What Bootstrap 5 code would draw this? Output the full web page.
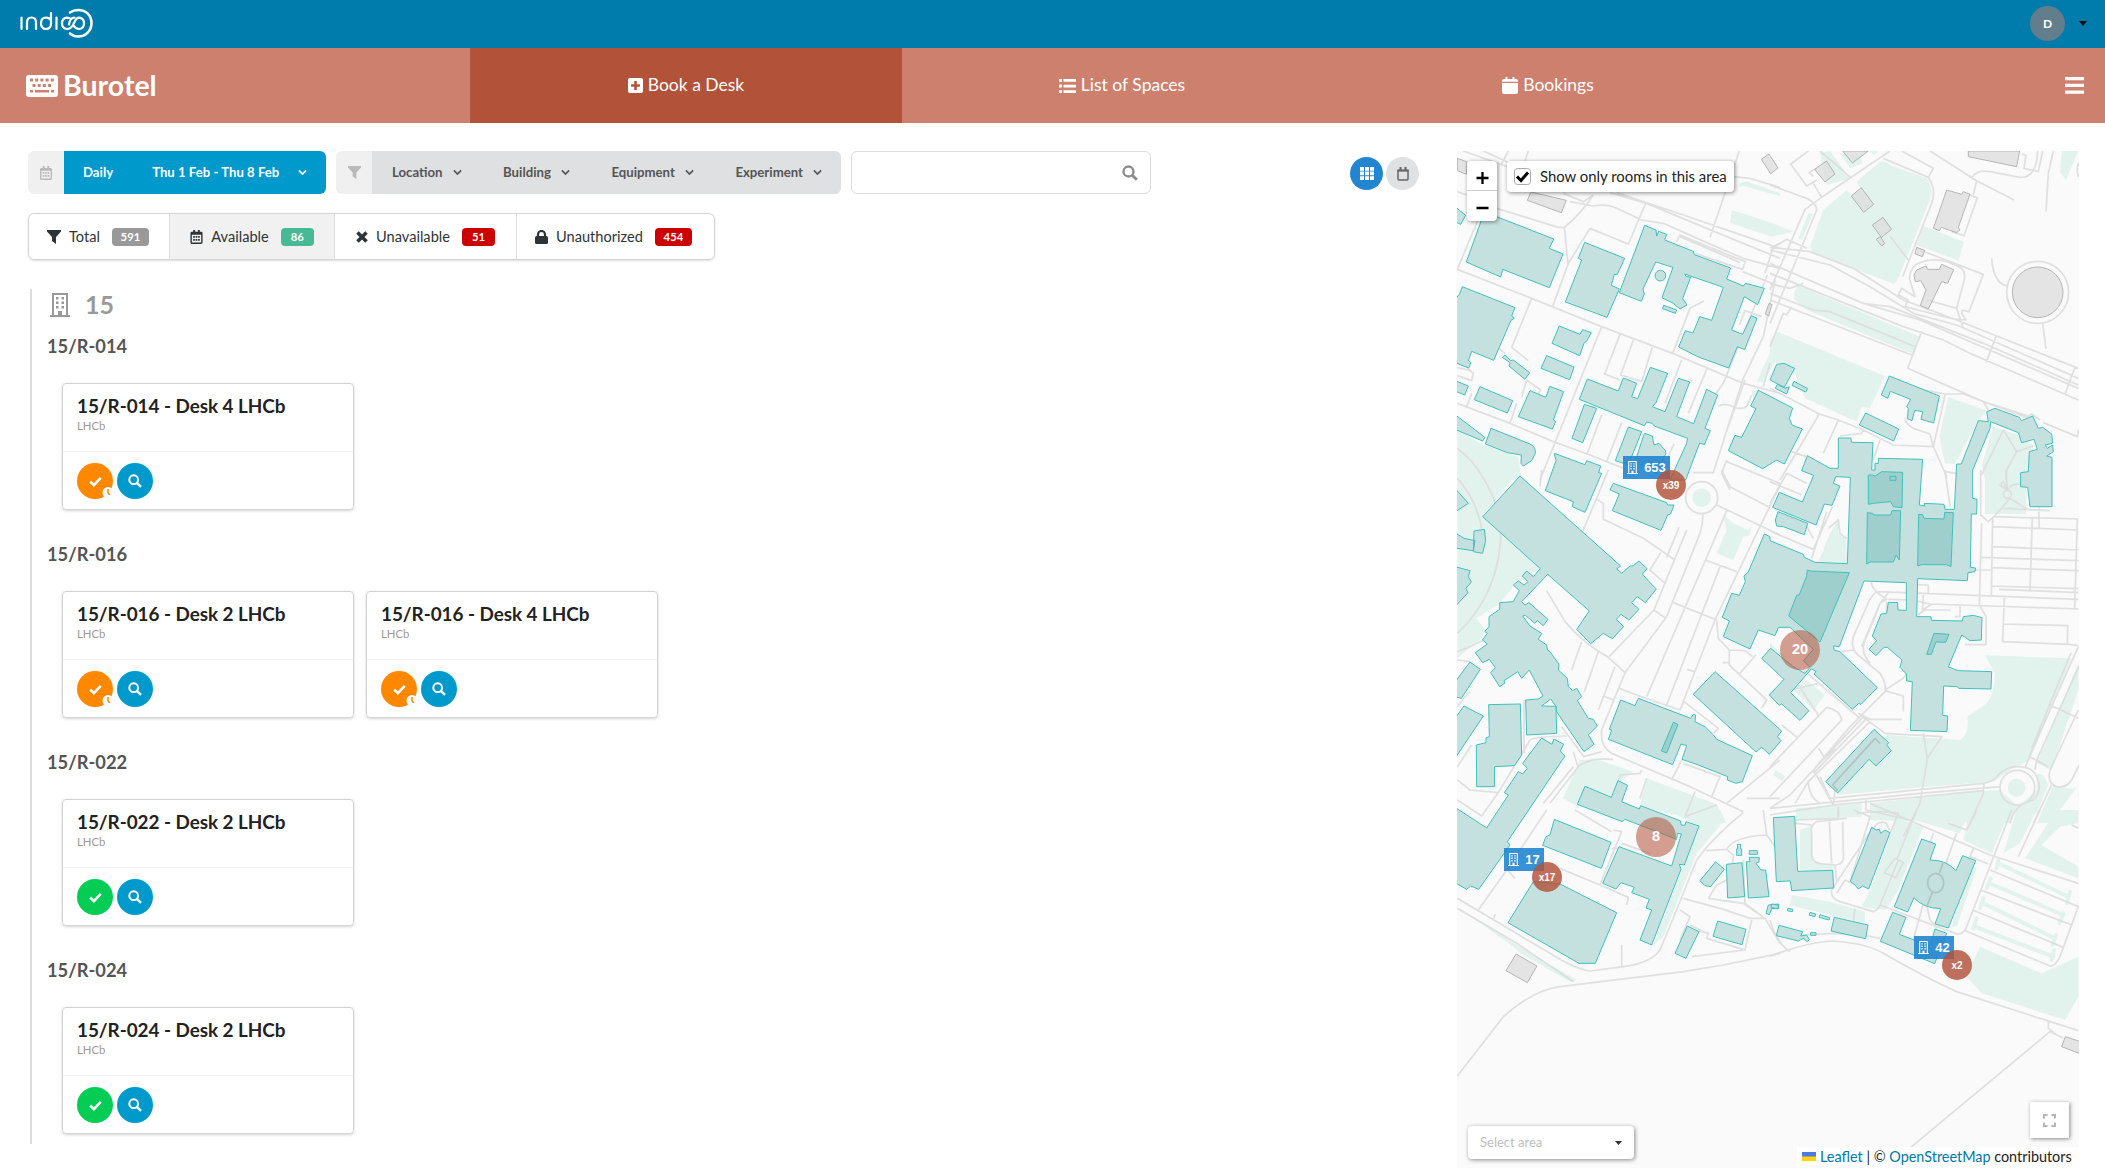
<!DOCTYPE html>
<html lang="en">
<head>
<meta charset="utf-8">
<title>Burotel</title>
<meta name="viewport" content="width=device-width, initial-scale=1">
<link href="https://cdn.jsdelivr.net/npm/bootstrap@5.3.0/dist/css/bootstrap.min.css" rel="stylesheet">
<style>
body{font-family:Lato,"Open Sans",sans-serif;font-size:14px;color:#222;height:1173px;overflow:hidden;background:#fff}
svg{display:block;flex:none}
.top-bar{height:48px;background:#007cac;padding:0 18px 1px 19px}
.avatar{width:35px;height:35px;background:#627d8b;font-size:12px}
.module-bar{height:75px;background:#ce806e;color:#fff}
.brand{width:470px;padding-left:26px;font-size:28.5px;gap:5px}
.module-tab{width:432px;font-size:17.5px;gap:5px;color:#fff!important;text-decoration:none!important}
.module-tab.active{background:#b25239}
.workspace{padding:28px 26px 0 28px}
.results-col{width:1429px}
.filter-cap{width:36px;height:43px;background:#f0f0f0;color:#b9b9b9}
.filter-group{height:43px;font-weight:700;font-size:13.2px}
.filter-blue{background:#09c;color:#fff}
.filter-grey{background:#dfe0e2;color:#555}
.search-box{width:300px;height:43px;border:1px solid #dcdddf;padding-right:12px}
.view-btn{width:33px;height:33px}
.status-bar{margin-top:19px;height:47px;width:687px;border:1px solid #d4d4d5;box-shadow:0 1px 2px rgba(34,36,38,.15);font-size:14.6px;color:#2e3436}
.status-bar>div{border-right:1px solid #dededf;gap:8px}
.status-bar>div:last-child{border-right:0}
.count{min-width:32px;height:18px;padding:0 8px;border-radius:4px;color:#fff;font-weight:700;font-size:11.3px;line-height:17px;text-align:center;margin-left:4px}
.building-group{margin:29px 0 0 2px;border-left:2px solid #ddd;height:855px;padding-left:15px}
.building-title{height:32px;font-size:25px;color:#999;gap:15px;padding-left:3px}
.room-title{height:22px;font-size:18.3px;line-height:22px;color:#555;margin-bottom:26px}
.room-group{height:208px;padding-top:14px}
.desk-card{width:292px;height:127px;border:1px solid #d4d4d5;border-radius:4px;box-shadow:0 1px 3px #d4d4d5}
.desk-info{height:68px;padding:12px 14px;border-bottom:1px solid #efefef}
.desk-name{font-size:18.9px;line-height:20px;letter-spacing:-.05px;color:#222}
.desk-sub{font-size:11.3px;line-height:14px;color:#999;margin-top:3px}
.desk-actions{padding:11px 14px;gap:4px}
.act{width:36px;height:36px}
.bg-ask{background:#ff8800}.bg-ok{background:#05cc55}.bg-look{background:#09c}
.map-pane{width:622px;height:1017px;background:#fafafa;overflow:hidden}
.map-pane .over{position:absolute;background:#fff;box-shadow:1px 1px 4px rgba(0,0,0,.45)}
.lawn{fill:#e2f3ed}.lawn-strip{fill:none;stroke:#e2f3ed;stroke-width:12;stroke-linecap:round}
.road{fill:none;stroke:#ddd;stroke-opacity:.9;stroke-width:5.2;stroke-linejoin:round}
.plain{fill:#dcdcdc;fill-opacity:.75;stroke:#aaa;stroke-width:2.5}
.block{fill:#c5e1df;stroke:#3fc1ba;stroke-width:3}
.court{fill:#9fcfcd;stroke:#3fc1ba;stroke-width:3}
.pin{position:absolute;height:23px;background:rgba(33,133,208,.9);color:#fff;font:700 13px/23px "Liberation Sans",sans-serif;gap:6px}
.bubble{position:absolute;border-radius:50%;color:#fff;font-family:"Liberation Sans",sans-serif;font-weight:700}
.bubble-s{width:30px;height:30px;background:rgba(178,82,57,.82);font-size:10px}
.bubble-l{width:40px;height:40px;background:rgba(178,82,57,.55);font-size:14.5px}
.credit a{color:#0078a8!important;text-decoration:none!important}
</style>
<script src="https://cdn.jsdelivr.net/npm/bootstrap@5.3.0/dist/js/bootstrap.bundle.min.js"></script>
</head>
<body>
<svg width="0" height="0" class="position-absolute">
<defs>
<symbol id="i-building" viewBox="0 0 20 24"><path fill="currentColor" fill-rule="evenodd" d="M2 0h16v22h2v2H0v-2h2zM4 2v20h4v-4h4v4h4V2z"/><path fill="currentColor" d="M6 4h2.500v2.500H6zM11.500 4H14v2.500h-2.500zM6 8.500h2.500V11H6zM11.500 8.500H14V11h-2.500zM6 13h2.500v2.500H6zM11.500 13H14v2.500h-2.500z"/></symbol>
<symbol id="i-search" viewBox="0 0 16 16"><circle cx="6.500" cy="6.500" r="5" fill="none" stroke="currentColor" stroke-width="2.300"/><path d="M10.300 10.300L14.800 14.800" stroke="currentColor" stroke-width="2.800"/></symbol>
<symbol id="i-check" viewBox="0 0 16 13"><path d="M1.500 6.500L6 11L14.500 2" fill="none" stroke="currentColor" stroke-width="3.200"/></symbol>
<symbol id="i-caret" viewBox="0 0 10 7"><path d="M1 1.200L5 5.200L9 1.200" fill="none" stroke="currentColor" stroke-width="1.900"/></symbol>
<symbol id="i-funnel" viewBox="0 0 14 14"><path d="M0 0h14v1.500L9 7v7l-4-3V7L0 1.500z" fill="currentColor"/></symbol>
<symbol id="i-cal" viewBox="0 0 13 15"><path fill="currentColor" fill-rule="evenodd" d="M3 0h2v2h3V0h2v2h1.500Q13 2 13 3.500v10Q13 15 11.500 15h-10Q0 15 0 13.500v-10Q0 2 1.500 2H3zM1.500 5v8.500h10V5z"/><path fill="currentColor" d="M3 6.500h1.800v1.800H3zM5.600 6.500h1.800v1.800H5.600zM8.200 6.500H10v1.800H8.200zM3 9.700h1.800v1.800H3zM5.600 9.700h1.800v1.800H5.600zM8.200 9.700H10v1.800H8.200z"/></symbol>
</defs>
</svg>

<header class="top-bar d-flex align-items-center justify-content-between">
<svg width="76" height="34" viewBox="0 0 76 34" fill="none" stroke="#fff" stroke-width="2.200" stroke-linecap="round" aria-label="indico"><path d="M2.500 10.500V22M8 22V15.500Q8 10.500 12.500 10.500T17 15.500V22M32 6V16.500Q32 22 27 22T22 16.300T27 10.600Q30.500 10.600 32 13.500M37.500 10.500V22"/><path d="M52 12Q50.500 10.600 48 10.600Q43 11 43 16.300T48 22Q51.500 22 54 18L55.500 15Q57.500 10.600 60 10.600Q65 11 65 16.300T60 22Q56.500 22 54.500 18.500M50 17.500Q51 10.600 55.500 10.600"/><path stroke-width="2.600" d="M51 5.500Q54.500 3 59 3C67 3 72.500 8.500 72.500 16S67 29.500 59 29.500Q54.500 29.500 51 26.500"/></svg>
<div class="d-flex align-items-center"><div class="avatar rounded-circle text-white fw-bold d-flex align-items-center justify-content-center" style="margin-right:14px">D</div><svg width="8" height="6" viewBox="0 0 8 6"><path d="M0 0h8L4 5z" fill="#111"/></svg></div>
</header>

<nav class="module-bar d-flex">
<div class="brand d-flex align-items-center fw-bold"><svg width="32" height="22" viewBox="0 0 32 22"><path fill="#fff" fill-rule="evenodd" d="M3 0h26q3 0 3 3v16q0 3-3 3H3q-3 0-3-3V3q0-3 3-3zM4 3.500v3h3v-3zm5.200 0v3h3v-3zm5.200 0v3h3v-3zm5.200 0v3h3v-3zm5.200 0v3h3v-3zM6.500 9v3h3V9zm5.200 0v3h3V9zm5.200 0v3h3V9zm5.200 0v3h3V9zM4 15v2.500h3V15zm5 0v2.500h14V15zm16 0v2.500h3V15z"/></svg><span>Burotel</span></div>
<a href="#" class="module-tab active d-flex align-items-center justify-content-center"><svg width="15" height="15" viewBox="0 0 17 17"><path fill="#fff" fill-rule="evenodd" d="M2 0h13q2 0 2 2v13q0 2-2 2H2q-2 0-2-2V2q0-2 2-2zm5 3.500V7H3.500v3H7v3.500h3V10h3.500V7H10V3.500z"/></svg>Book a Desk</a>
<a href="#" class="module-tab d-flex align-items-center justify-content-center ps-2"><svg width="17" height="14" viewBox="0 0 17 14"><path fill="#fff" d="M0 0h3v3H0zM4.500 0H17v2.700H4.500zM0 5.500h3v3H0zM4.500 5.700H17v2.700H4.500zM0 11h3v3H0zM4.500 11.200H17v2.700H4.500z"/></svg>List of Spaces</a>
<a href="#" class="module-tab d-flex align-items-center justify-content-center pe-1"><svg width="16" height="17" viewBox="0 0 16 17"><path fill="#fff" d="M3.500 0h2v2h5V0h2v2H14q2 0 2 2v.800H0V4q0-2 2-2h1.500zM0 6h16v9q0 2-2 2H2q-2 0-2-2z"/></svg>Bookings</a>
<div class="ms-auto d-flex align-items-center pe-3"><svg class="me-1" width="20" height="17" viewBox="0 0 20 17"><path fill="#fff" d="M0 0h19v3.200H0zM0 6.800h19V10H0zM0 13.600h19v3.200H0z"/></svg></div>
</nav>

<main class="workspace d-flex">
<section class="results-col">
<div class="d-flex align-items-center">
<div class="filter-group d-flex rounded overflow-hidden">
<div class="filter-cap d-flex align-items-center justify-content-center"><svg width="12" height="14"><use href="#i-cal"/></svg></div>
<div class="filter-blue d-flex align-items-center" style="width:262px"><span style="margin:0 39px 0 19px">Daily</span><span class="me-2">Thu 1 Feb - Thu 8 Feb</span><svg class="ms-auto" style="margin-right:19px" width="9" height="7"><use href="#i-caret"/></svg></div>
</div>
<div class="filter-group d-flex rounded overflow-hidden" style="margin:0 10px">
<div class="filter-cap d-flex align-items-center justify-content-center"><svg width="13" height="13"><use href="#i-funnel"/></svg></div>
<div class="filter-grey d-flex align-items-center justify-content-between" style="width:469px;padding:0 19px 0 20px">
<span class="d-flex align-items-center">Location<svg style="margin-left:10px" width="9" height="7"><use href="#i-caret"/></svg></span>
<span class="d-flex align-items-center">Building<svg style="margin-left:10px" width="9" height="7"><use href="#i-caret"/></svg></span>
<span class="d-flex align-items-center">Equipment<svg style="margin-left:10px" width="9" height="7"><use href="#i-caret"/></svg></span>
<span class="d-flex align-items-center">Experiment<svg style="margin-left:10px" width="9" height="7"><use href="#i-caret"/></svg></span>
</div></div>
<div class="search-box rounded d-flex align-items-center justify-content-end" style="color:#8b8b8b"><svg width="16" height="16"><use href="#i-search"/></svg></div>
<div class="d-flex" style="margin-left:199px;gap:3px;padding-top:2px">
<div class="view-btn rounded-circle d-flex align-items-center justify-content-center" style="background:#2185d0"><svg width="14" height="13" viewBox="0 0 14 13"><path fill="#fff" d="M0 0h4v3.700H0zM5 0h4v3.700H5zM10 0h4v3.700h-4zM0 4.600h4v3.700H0zM5 4.600h4v3.700H5zM10 4.600h4v3.700h-4zM0 9.200h4V13H0zM5 9.200h4V13H5zM10 9.200h4V13h-4z"/></svg></div>
<div class="view-btn rounded-circle d-flex align-items-center justify-content-center" style="background:#e0e1e2"><svg width="12" height="14" viewBox="0 0 12 14"><path d="M1 3.500h10V12q0 1-1 1H2q-1 0-1-1z" fill="none" stroke="#666" stroke-width="1.500"/><path d="M.500 2.500h11v2H.500zM2.500 0h2v3h-2zM7.500 0h2v3h-2z" fill="#666"/></svg></div>
</div>
</div>

<div class="status-bar rounded d-flex">
<div class="d-flex align-items-center justify-content-center" style="width:141px;padding-right:2px"><svg width="14" height="14"><use href="#i-funnel"/></svg>Total<span class="count" style="background:#999;width:37px">591</span></div>
<div class="d-flex align-items-center justify-content-center" style="width:165px;background:#f1f1f1"><svg width="13" height="14"><use href="#i-cal"/></svg>Available<span class="count" style="background:#45ba94;width:33px">86</span></div>
<div class="d-flex align-items-center justify-content-center" style="width:182px"><svg width="12" height="12" viewBox="0 0 12 12"><path d="M1.500 1.500l9 9M10.500 1.500l-9 9" stroke="#2e3436" stroke-width="3.600"/></svg>Unavailable<span class="count" style="background:#c00;width:33px">51</span></div>
<div class="d-flex align-items-center justify-content-center flex-fill pe-1"><svg width="13" height="14" viewBox="0 0 13 14"><path d="M3 7V4.500a3.500 3.500 0 0 1 7 0V7" fill="none" stroke="#2e3436" stroke-width="2.200"/><rect y="6" width="13" height="8" rx="1.500" fill="#2e3436"/></svg>Unauthorized<span class="count" style="background:#c00;width:37px">454</span></div>
</div>

<div class="building-group">
<div class="building-title d-flex align-items-center fw-bold"><svg width="20" height="24"><use href="#i-building"/></svg>15</div>
<div class="room-group"><div class="room-title fw-bold">15/R-014</div>
<div class="d-flex" style="margin-left:15px;gap:12px">
<div class="desk-card"><div class="desk-info"><div class="desk-name fw-bold">15/R-014 - Desk 4 LHCb</div><div class="desk-sub">LHCb</div></div><div class="desk-actions d-flex text-white"><span class="act bg-ask rounded-circle d-flex align-items-center justify-content-center position-relative"><svg width="13" height="11"><use href="#i-check"/></svg><svg class="position-absolute bottom-0 end-0" width="11" height="12" viewBox="0 0 11 12"><circle cx="6" cy="5.500" r="5.500" fill="#fff"/><path d="M6 2v4l2 2" stroke="#f80" stroke-width="1.500" fill="none"/></svg></span><span class="act bg-look rounded-circle d-flex align-items-center justify-content-center"><svg width="14" height="14"><use href="#i-search"/></svg></span></div></div>
</div></div>
<div class="room-group"><div class="room-title fw-bold">15/R-016</div>
<div class="d-flex" style="margin-left:15px;gap:12px">
<div class="desk-card"><div class="desk-info"><div class="desk-name fw-bold">15/R-016 - Desk 2 LHCb</div><div class="desk-sub">LHCb</div></div><div class="desk-actions d-flex text-white"><span class="act bg-ask rounded-circle d-flex align-items-center justify-content-center position-relative"><svg width="13" height="11"><use href="#i-check"/></svg><svg class="position-absolute bottom-0 end-0" width="11" height="12" viewBox="0 0 11 12"><circle cx="6" cy="5.500" r="5.500" fill="#fff"/><path d="M6 2v4l2 2" stroke="#f80" stroke-width="1.500" fill="none"/></svg></span><span class="act bg-look rounded-circle d-flex align-items-center justify-content-center"><svg width="14" height="14"><use href="#i-search"/></svg></span></div></div>
<div class="desk-card"><div class="desk-info"><div class="desk-name fw-bold">15/R-016 - Desk 4 LHCb</div><div class="desk-sub">LHCb</div></div><div class="desk-actions d-flex text-white"><span class="act bg-ask rounded-circle d-flex align-items-center justify-content-center position-relative"><svg width="13" height="11"><use href="#i-check"/></svg><svg class="position-absolute bottom-0 end-0" width="11" height="12" viewBox="0 0 11 12"><circle cx="6" cy="5.500" r="5.500" fill="#fff"/><path d="M6 2v4l2 2" stroke="#f80" stroke-width="1.500" fill="none"/></svg></span><span class="act bg-look rounded-circle d-flex align-items-center justify-content-center"><svg width="14" height="14"><use href="#i-search"/></svg></span></div></div>
</div></div>
<div class="room-group"><div class="room-title fw-bold">15/R-022</div>
<div class="d-flex" style="margin-left:15px;gap:12px">
<div class="desk-card"><div class="desk-info"><div class="desk-name fw-bold">15/R-022 - Desk 2 LHCb</div><div class="desk-sub">LHCb</div></div><div class="desk-actions d-flex text-white"><span class="act bg-ok rounded-circle d-flex align-items-center justify-content-center"><svg width="13" height="11"><use href="#i-check"/></svg></span><span class="act bg-look rounded-circle d-flex align-items-center justify-content-center"><svg width="14" height="14"><use href="#i-search"/></svg></span></div></div>
</div></div>
<div class="room-group"><div class="room-title fw-bold">15/R-024</div>
<div class="d-flex" style="margin-left:15px;gap:12px">
<div class="desk-card"><div class="desk-info"><div class="desk-name fw-bold">15/R-024 - Desk 2 LHCb</div><div class="desk-sub">LHCb</div></div><div class="desk-actions d-flex text-white"><span class="act bg-ok rounded-circle d-flex align-items-center justify-content-center"><svg width="13" height="11"><use href="#i-check"/></svg></span><span class="act bg-look rounded-circle d-flex align-items-center justify-content-center"><svg width="14" height="14"><use href="#i-search"/></svg></span></div></div>
</div></div>
</div>
</section>

<section class="map-pane position-relative">
<svg width="622" height="1017" viewBox="1457 151 622 1017">
<!-- lawns -->
<g class="lawn">
<path transform="translate(1450 140) scale(.33333)" d="M868 130L890 124L990 160V168L880 138L868 142ZM846 210L968 250L1030 275L965 290L840 248ZM990 575L920 725H940L990 640ZM22 870L100 915L205 950L215 1020H22ZM905 750L925 752L910 785Z"/>
<path transform="translate(1770 140) scale(.33333)" d="M330 65Q350 62 360 75L470 115Q490 140 480 180L385 415L372 432L130 340L120 320L160 210L230 150L245 165L272 145L260 125ZM460 258L582 305L566 362L440 315ZM85 437L450 590L430 643L110 510L75 480Q65 460 85 437ZM22 575L345 708L300 805L275 800L260 845L105 775L70 690L0 660V600ZM535 770L650 812L620 850L555 972L525 970L508 890ZM670 860L700 870L745 885L790 915L775 1020H645L635 975ZM875 33H925L888 120L870 95ZM150 40L180 33L240 115L170 135ZM210 40L240 85L280 70L270 50ZM300 33H325L310 45ZM115 220L128 222L95 300L85 295Z"/>
<path transform="translate(1450 470) scale(.33333)" d="M22 0H210L100 135L270 295L190 350L150 400L80 445L105 480L95 505L22 565ZM390 870L440 868L550 905L500 945L480 985L400 960L385 1010L338 985ZM590 925L800 1003L830 1060L650 1030L570 1005ZM727 83a28 28 0 1 0 56 0a28 28 0 1 0 -56 0ZM820 135L850 160L895 180L905 165L900 195L880 200L850 270L800 250L830 180Z"/>
<path transform="translate(1770 470) scale(.33333)" d="M205 150L180 190L145 275L232 280L228 205L205 190ZM110 630L165 675L130 720L70 660ZM645 556L905 565L780 870L720 900L670 935L470 950L200 975L350 795L570 810Q600 790 592 740L650 700Q675 670 675 610ZM925 580V660L845 900L800 880ZM645 0H770L768 132H645ZM800 910L820 915L835 945L800 1030L760 1040L735 1020L720 1060L300 1050V1000L600 965L690 960L745 1010L800 960ZM713 953a27 27 0 1 0 54 0a27 27 0 1 0 -54 0ZM850 945L890 955L918 955L840 1060H800ZM78 1015L275 1000V1040L78 1050ZM15 900L45 918L38 934L10 915ZM0 520L60 570L0 540Z"/>
<path transform="translate(1450 810) scale(.33333)" d="M22 290L210 410L380 510L360 515L210 430L190 410ZM650 0H810L825 30L740 130L640 380L610 405L695 180L747 48Z"/>
<path transform="translate(1770 810) scale(.33333)" d="M380 25L460 50L380 250L345 300L275 290L300 240ZM65 255L180 275L285 305V340L200 320L60 285ZM90 60L125 45L130 155L190 165V180H90ZM400 0H600L570 70L400 20ZM600 0H720L665 130L580 90ZM740 0H800L750 100L700 130ZM860 0H925V40L870 50L815 105L925 170V205L765 145ZM630 410L815 490L925 440V560L885 630L635 550L590 500ZM600 165L620 175L560 350L545 350Z"/>
<path class="lawn-strip" transform="translate(1770 810) scale(.33333)" d="M685 160L895 260M660 220L880 315M640 280L855 385M615 350L850 440M685 150L680 175M662 205L650 235M640 265L630 295M620 325L610 355M900 245L890 280M880 310L868 340M858 375L848 405M852 420L845 450"/>
</g>
<!-- roads and footpaths -->
<g class="road">
<path transform="translate(1450 140) scale(.33333)" d="M40 33L172 80M100 33L172 66M235 33L225 62M175 33L155 72M868 33L780 292M22 155L50 165M140 205L325 262L343 262Q390 225 430 165M343 262L354 372L420 265L535 312L587 190M354 372L308 500M82 245L22 388L245 475L455 560L668 640L880 730L990 760M245 475L185 622L235 662M668 640L720 505L762 483M455 560L270 1020M510 583L464 702L510 720M550 600L512 705L575 725L607 622M695 660L645 790M770 688L715 820M22 790L180 850L310 905L420 945L560 1000M180 850L200 790M50 800L65 760M215 770L230 720L272 750L262 765M455 825L410 945M515 848L470 965M672 912L640 980M340 160L400 185L430 165M360 185L430 198Q470 190 500 205L575 240L640 250L770 308L880 355L990 385M480 158L590 190L830 290L990 355M500 158L700 225L860 280L990 325M680 305L690 285L860 355L886 365L878 388L735 340M690 290L830 350L870 368M850 110L900 115L990 142M878 395L990 440M952 405L820 730L770 800M975 420L940 590L880 715L790 998H730M868 555L885 512L935 530M990 310L970 320L945 400M805 797Q830 790 850 800T890 800L905 765M885 720L820 900M830 960L815 1000L840 1050M830 965L990 1030M22 925Q70 960 100 1015M22 683L55 690L70 700L65 722L22 707M65 695L50 680L55 650M140 620L165 640M960 670L940 740"/>
<path transform="translate(1770 140) scale(.33333)" d="M0 135L110 175Q140 190 140 210L85 345L0 550M155 172L105 208L0 450M155 172L360 33M150 33L242 112M155 172L130 130M140 120L110 138L62 72L115 33M130 110L118 97L140 85M340 55L475 112L490 85L395 33M475 112Q500 150 485 190L398 410M480 33L620 122L732 180M606 112Q620 88 660 95L750 112Q800 115 803 33M620 122L610 165M598 165L622 173L582 287L545 275M755 42L768 45L762 85L805 95L818 33M850 33L835 100L828 215M925 70Q918 90 925 110M0 322L120 335L250 385L400 480L560 540L680 588L925 685M0 330L180 375L300 440L430 520L560 555L925 715M0 370L280 490L450 540L925 745M0 400L400 560L520 600L600 640L925 780M0 432L60 445L100 430M0 460L130 510L180 515L435 620M0 480L425 645M5 325L50 298L110 325M275 490L360 500L640 610L925 735M455 575L413 685L640 785L780 830M820 848L922 890L925 870M678 590L648 668M915 682L885 762M360 288L415 360M665 355Q670 430 712 438M818 550L828 627M450 330L640 403L597 515L577 510L575 520L588 540L550 537L405 500L415 480L385 465L395 445L435 470L420 420Q415 400 435 375Q500 340 575 385Q590 400 580 430L560 505L580 565M470 480L560 505M0 745L148 822L205 840L280 870L370 915L490 920L480 882L430 865Q410 855 405 835M148 822L30 1020M205 840L160 940M280 870L275 880L210 888M525 765L490 920L530 1010M440 745L525 762H580L640 785L655 810M700 870L635 1005M700 870L740 935L710 990L708 1020M740 935L790 918M65 935L110 950M525 995L560 1000M330 900L310 960M65 500L50 525L40 520L0 620M640 785L770 832L785 822L810 840"/>
<circle transform="translate(1770 140) scale(.33333)" cx="803" cy="457" r="93"/>
<path transform="translate(1450 470) scale(.33333)" d="M100 25Q150 100 152 210Q140 380 22 490M22 25Q80 90 95 175M270 50L275 0M475 0L400 180M440 88L460 100V148L580 205L675 270M632 248L600 300L645 340M687 172L650 262M710 180L612 420L475 562M758 132Q760 160 750 190L650 440L525 608M707 83a48 48 0 1 0 96 0a48 48 0 1 0 -96 0M800 105L990 195M832 118L590 680M990 45L795 450M815 0L840 50L955 110M765 270L860 305M810 290L650 705M670 398L800 450L805 505L838 540L885 542L908 560M795 450L690 720M612 420L645 443M290 362L345 455Q400 520 475 562L525 608L455 780Q450 830 485 850L720 950L880 1025M395 515L365 600M445 545L403 665M495 590L445 720M460 678L490 690M508 655L560 675L690 720L702 695L805 775L790 790M838 540V585L950 690L935 715M818 578H838M918 555L868 612M712 598L735 605M22 545L60 530L100 510M22 570L60 575M22 710L45 680L60 665M22 930L60 960L145 968L240 810Q255 800 350 798M22 890L65 825M222 690V850M335 770L402 860L455 845M280 1000L370 890M300 1000L385 890Q420 860 490 868M22 990L95 1038L150 960M695 870L665 930M575 900L570 910L510 915L500 945M590 925L570 985M700 880L810 920L785 980M735 965L705 1040L800 1005M830 1000L990 870M890 985L990 985M370 845L385 895"/>
<path transform="translate(1770 470) scale(.33333)" d="M0 35L95 75M50 10L110 40M50 10L0 100M0 183L130 238L188 108M125 265L170 125M175 175L205 150L210 190L230 205M105 160L130 205M525 0L540 110M632 0V135L655 155L672 140L925 147M668 140L664 380M670 170L925 180M668 230L925 240M632 262L925 272M665 293L925 302M617 300H665M664 348L925 356M687 358L925 368M787 142L780 362M922 147L914 415M807 112V175M700 115L840 122M672 140L720 85L770 117M708 0L712 60L690 45L700 35L712 60M712 60Q725 40 755 42M635 160L628 405L648 440V524H585M320 365L925 388M355 388L430 390L480 402L925 417M703 380L698 515L900 523L925 527M700 462L893 467L892 520M460 370L458 420L485 402M445 435L462 420H542M570 405V440H555M475 370V345L415 343M305 335Q300 355 350 388L330 400L275 530M320 365Q300 380 290 410L250 500Q240 540 270 560L330 610Q350 640 345 665L240 770L130 900L190 1005M355 368L330 400Q320 430 290 500Q265 540 300 580M350 395L348 475L325 465M250 540L215 545M345 662L400 678V725M345 660L400 625L410 612M265 730L300 748H395M265 730L345 790L515 800L472 865L460 790M472 865L450 1000L400 1100M100 600L270 745M170 712L0 890M170 712Q210 720 215 750L0 980M60 660L145 640M85 645L145 735M35 765L85 805M290 745L130 910M300 755L115 935L75 1000M195 835L165 865L145 835M280 740L60 975L0 1015M115 930Q115 980 150 1000M0 1015L450 970L690 950M0 1035L190 1005L640 962M150 920L180 985L640 940Q670 935 685 915Q710 890 740 890Q790 890 800 920Q820 960 790 990L760 1000Q730 1020 720 1060M690 953a52 52 0 1 0 104 0a52 52 0 1 0 -104 0M925 530L778 860L765 895M903 548L785 835M940 560L800 870L795 900M840 705L925 745M925 720L840 900Q830 940 860 950Q890 955 905 930L945 850M778 860L835 890M845 945L790 1060M642 940L640 970L605 1050M195 960L190 1005M288 990V1020L420 1050M205 1010V1040"/>
<path transform="translate(1450 810) scale(.33333)" d="M22 265L300 430Q380 480 420 483L520 470Q600 460 630 420L680 300L740 150Q790 80 880 8M22 295L200 400L370 515M22 798L160 620Q250 540 330 530L700 485L820 465L990 430M85 300L170 180L290 0M168 175L195 205M330 175L450 225L535 262L530 285M375 0L485 65M490 60L515 65L450 225M485 115H505M515 100L600 130M515 405V470M130 330L135 312M768 122L830 118Q850 80 950 75M830 118L850 135L848 160M700 265L820 298L900 325H945L990 400M690 300L720 320L690 390M775 265L800 225L830 210M725 440L885 420L905 330M745 362L775 370L770 385L880 418M940 0L950 75L975 110M775 265L880 280L945 325M720 345L760 365M880 150L885 280L945 325"/>
<path transform="translate(1770 810) scale(.33333)" d="M0 438Q120 395 190 393Q290 400 340 430Q460 500 560 545L925 662M350 1072L840 665L880 685M835 632V655L860 675M0 330Q20 400 60 425M230 25L140 35Q120 45 125 70V140Q130 160 160 162L200 165Q225 160 220 130L218 35M178 35L185 160M195 165L200 215M225 210L275 232M250 0L300 20L240 215M225 210L200 250M310 50L185 240Q180 265 210 275L310 305Q325 300 330 285L385 150M375 145L400 157L378 203L342 188ZM440 0L380 150M330 285L560 372Q580 375 590 350L725 0M300 -20L660 135L925 220M260 10Q340 0 385 10L360 70M310 60Q320 30 350 40L358 60M620 0L590 60L535 40M560 70L520 180M460 280L430 390M470 285L480 330L500 355M490 70L480 100M610 115L600 140L655 162M660 180L925 290L870 440Q855 470 840 468L580 360M632 240L905 345M608 300L880 412M810 0L745 140M905 45L925 55M255 295L250 335M100 375L190 370L295 378L330 385M75 40L125 45M205 0V25L75 30"/>
<circle transform="translate(1770 470) scale(.33333)" cx="712" cy="73" r="12"/>
</g>
<!-- neutral buildings -->
<g class="plain">
<path transform="translate(1450 140) scale(.33333)" d="M22 55L50 65V103L22 92ZM243 156L349 181L334 218L232 181ZM934 58L957 42L984 84L962 101ZM957 490L966 494L956 528L946 522Z"/>
<path transform="translate(1770 140) scale(.33333)" d="M170 63L195 102L165 126L134 88ZM218 33H295L247 69ZM595 33H749L740 80L595 50ZM274 143L311 193L281 217L244 168ZM339 232L365 268L334 292L307 255ZM331 290L344 310L335 318L319 298ZM530 150L575 163L580 155L600 163L565 262L570 270L560 278L514 262L508 272L490 265ZM440 322L464 331L457 350L435 341ZM432 405L440 390L468 378L473 388L508 388L515 373L551 389L533 430L515 425L475 507L451 496L468 450L452 422L436 425ZM727 457a76 76 0 1 0 152 0a76 76 0 1 0 -152 0Z"/>
<path transform="translate(1450 810) scale(.33333)" d="M198 432L261 468L232 518L168 482Z"/>
<path transform="translate(1770 810) scale(.33333)" d="M886 680L935 696V733L875 710Z"/>
</g>
<!-- site buildings -->
<g class="block">
<path transform="translate(1450 140) scale(.33333)" d="M15 200L47 226L32 253L15 245ZM98 230H140L311 297L298 325L339 342L298 443L158 388L152 411L49 366ZM404 307L524 355L502 403L493 403L484 436L508 447L471 532L346 486L395 360L385 355ZM584 256L618 270L620 288L626 274L650 283L644 300L730 334L733 344L842 384L830 417L880 438L887 430L943 445L923 494L883 470L845 570L878 583L904 527L921 535L884 629L862 620L836 684L745 651L686 621L706 572L729 579L749 530L785 541L820 442L704 402L709 410L722 411L698 476L711 495L690 507L670 490L636 473L669 382L617 366L579 447L583 462L574 484L508 458ZM641 496L680 510L676 520L638 506ZM615 407a16 16 0 1 0 32 0a16 16 0 1 0 -32 0ZM37 440L195 503L185 528L193 535L183 541L131 661L65 634L55 662L63 668L56 684L15 668V478L28 463ZM328 558L390 583L398 569L424 578L409 605L403 607L389 647L306 610ZM290 647L372 681L359 719L273 685ZM165 645L182 662L190 660L239 698L225 718L177 678L180 668L157 652ZM90 740L188 782L172 819L73 779ZM15 722L55 738L44 765L15 753ZM240 752L288 772L299 739L341 755L310 840L317 845L307 867L205 830ZM412 717L505 753L520 714L560 730L545 770L563 776L601 682L653 700L618 788L607 800L645 815L685 715L719 726L680 830L731 851L770 748L803 765L765 865L781 872L763 914L749 909L707 1020H660L710 910L713 895L613 858L606 850L590 846L583 857L388 778ZM403 793L440 805L398 908L366 895ZM535 861L575 875L535 975L496 962ZM583 880L607 888L612 915L627 910L645 930L648 940L620 1000L555 965ZM15 824L105 892L98 903L15 868ZM123 865L240 912Q258 920 256 940L245 962L220 978L213 970L214 945L172 938L106 912ZM313 940L405 974L410 962L452 978L446 998L455 1000L405 1117L367 1100L370 1085L286 1052L318 962Z"/>
<path transform="translate(1770 140) scale(.33333)" d="M-35 751L68 804L58 835L66 855L97 867L43 972L20 960L-22 986L-125 932L-105 886L-85 892L-42 806L-58 798ZM42 670L74 685L43 742L0 720L20 673ZM22 733L45 745L58 740L50 762L16 745ZM72 724L113 746L107 756L66 736ZM358 708L508 768L491 849L453 838L458 815L434 811L426 842L412 836L415 805L410 800L422 778L361 754L353 775L334 765ZM287 819L386 867L371 903L268 855Z"/>
<path transform="translate(1450 470) scale(.33333)" d="M15 55L55 100L15 126ZM15 188L42 205L75 212L70 242L15 234ZM72 183L103 178L107 212L98 250L70 245ZM15 290L60 302L55 320L64 336L48 355L54 368L15 410ZM210 18L512 288L500 297L515 310L540 288L550 287L567 273L591 296L577 312L597 335L619 357L586 398L562 380L545 398L567 418L537 450L513 433L499 448L521 470L487 506L460 490L422 521L380 478L396 455L418 423L293 313L215 395L225 405L237 398L294 448L280 467L262 452L255 460L226 436L218 438L240 468L275 490L265 508L290 525L292 540L300 545L327 583L325 600L352 625L355 650L368 662L380 655L395 680L382 692L415 745L430 748L442 768L415 795L432 823L402 845L340 755L320 725L318 709L302 687L275 708L318 709L320 790L230 795L227 690L265 687L279 678L238 600L215 625L203 605L162 632L164 640L149 650L122 608L136 593L118 568L98 578L76 548L112 522L97 510L112 490L104 484L117 470V440L149 418V398L190 395L208 362L190 345L205 333L222 345L234 335L217 318L230 303L250 320L271 296L98 140ZM60 576L91 598L34 685L15 680V636ZM116 704L211 702L215 855L193 887L134 890L133 950H80L79 825L108 818V803L118 800ZM42 708L100 738L15 865V745ZM275 804L306 823L312 807L341 823L331 843L345 858L172 1115L180 1125L86 1258L62 1248L50 1258L15 1238V1012L110 1074L175 975L163 968L205 905L218 912L232 895L218 880ZM490 40L650 98L653 105H672L662 132L653 135L633 181L487 122L508 72L480 60ZM512 690L555 707L565 685L722 745L730 733L737 735L735 755L765 770L790 795L800 808L907 857L877 935L858 940L832 930L833 920L745 885L696 868L710 827L693 822L668 884L475 808L485 780L478 778ZM795 605L995 783L982 800L993 812L958 853L935 832L918 846L730 673Z"/>
<path transform="translate(1770 470) scale(.33333)" d="M95 2L112 -43L180 -5H205V-96H242L245 -83L309 -82L305 0H315V-20H325V-35L458 -32L448 105L465 108L463 100L522 103L525 118H553L560 -18H574L625 -148L655 -145L650 -175L675 -185L748 -158L755 -148L788 -162L805 -125L818 -128L845 -108L848 -80L825 -75L832 -65L848 -75L850 -55L830 -42L846 -38V110H780L773 52L752 50V8L775 5L778 -55L802 -62L792 -92L755 -82L745 -112L662 -145L660 -125L608 0V85L621 88L620 132H604L601 292L617 294L615 305L594 308L592 332L443 326L440 440H483L484 451L577 453L580 440L610 436L636 443L634 510L600 512L575 495L535 591L566 602L665 605L663 657L566 655L562 650L521 648L518 736L533 738L531 785L421 781L427 635L410 633L409 612L390 592L396 570L352 532H342L318 557L297 538L320 512L307 498L333 432L350 430L355 397L383 398L384 420L409 421V338L282 333L208 530L191 528L192 540L210 545L322 653L273 703L266 700L247 718L132 612L138 605L125 596L62 668L117 722L90 751L35 702L28 706L-2 675L42 628L-25 565L2 535L70 590L105 610L120 592L100 572L130 538L60 472L25 472L15 497L-35 480L-60 537L-140 500L-122 453L-143 442L-115 370L-92 376L-74 335L-78 318L-65 306L-17 192L0 200V212L100 253L103 262L135 277L232 281L241 22L197 20L190 40L210 48L186 106L163 102L138 165L8 112L28 67L97 96L131 16ZM24 125L113 160L103 194L40 170L20 168L16 150ZM312 778L356 818L350 825L364 842L318 888L297 868L203 969L167 935Z"/>
<path transform="translate(1450 810) scale(.33333)" d="M405 -71L484 -38L504 -88L533 -74L515 -25L568 -3L572 -13L692 33L693 45L705 46L708 35L747 48L703 165L688 163L693 178L605 405L570 390L605 300L588 294L598 268L545 248L553 232L513 218L498 237L458 220L507 110L665 168L694 72L682 70L680 88L525 28L517 35L382 -17ZM313 28L483 97L454 175L278 106L288 80L300 75ZM250 215L330 222L500 308L436 460H387L174 338ZM797 155L823 178L782 230L765 227L750 212ZM829 163L876 158L884 260L833 264ZM889 155H900L898 142H928L927 155L918 160L933 180H947L957 260L895 264ZM862 103h10v14h3v19h-15v-19h3zM898 122h24v11h-24zM712 348L747 365L708 445L675 430ZM803 333L888 358L876 404L789 379ZM970 23L1034 19L1043 184L1148 181L1151 234L1025 242L1021 213L979 215ZM955 285L985 282V296H965L958 314L948 310Z"/>
<path transform="translate(1770 810) scale(.33333)" d="M305 52L318 60L328 58L332 70L345 60L360 68L296 237L278 228L265 237L255 225L241 214ZM455 87L497 102L480 150Q530 150 558 182L578 137L617 152L535 354L495 342L512 296Q460 295 432 263L413 306L373 290ZM368 307L408 322L388 373L480 408L495 357L530 370L494 461L331 394ZM27 346L98 365L92 378L110 375L118 388L112 395L100 385L85 393L19 377ZM193 322L294 345L287 386L183 363ZM120 307L137 312L135 320L118 316ZM150 314L179 323L177 330L147 322ZM54 295L69 298L67 305L52 302ZM5 282L25 285L24 296L3 293ZM122 368H138V376H122Z"/>
</g>
<g class="court">
<path transform="translate(1450 470) scale(.33333)" d="M670 757L684 763L650 849L634 843Z"/>
<path transform="translate(1770 470) scale(.33333)" d="M295 15H305L316 18L335 5L398 7L396 113L370 110L362 95L310 100L295 103ZM292 128L308 130L312 135H362L366 122H392L388 270L378 256L370 276H302L290 282ZM446 133L458 134L462 145L522 147L524 127L550 128L543 290L530 284H455L443 288ZM112 300L120 303L238 308L150 516L56 438L80 376L88 374L110 318ZM492 490L537 493L527 517L498 516L484 553H470ZM360 19h18v12h-18z"/>
</g>
<g class="road"><ellipse transform="translate(1770 810) scale(.33333)" cx="497" cy="219" rx="24" ry="29" style="stroke:#a9c3c2"/><path transform="translate(1770 810) scale(.33333)" style="stroke:#a9c3c2" d="M508 190L520 155M487 248L470 290"/><path transform="translate(1770 470) scale(.33333)" style="stroke:#a9c3c2" d="M203 962L188 945L315 805L330 820"/></g>
</svg>

<!-- markers, placed on the map canvas -->
<div class="pin d-flex align-items-center justify-content-center" style="left:166px;top:305px;width:47px"><svg width="11" height="13"><use href="#i-building"/></svg>653</div>
<div class="bubble bubble-s d-flex align-items-center justify-content-center" style="left:199px;top:319px">x39</div>
<div class="bubble bubble-l d-flex align-items-center justify-content-center" style="left:323px;top:479px">20</div>
<div class="bubble bubble-l d-flex align-items-center justify-content-center" style="left:179px;top:666px">8</div>
<div class="pin d-flex align-items-center justify-content-center" style="left:47px;top:697px;width:40px"><svg width="11" height="13"><use href="#i-building"/></svg>17</div>
<div class="bubble bubble-s d-flex align-items-center justify-content-center" style="left:75px;top:711px">x17</div>
<div class="pin d-flex align-items-center justify-content-center" style="left:457px;top:785px;width:40px"><svg width="11" height="13"><use href="#i-building"/></svg>42</div>
<div class="bubble bubble-s d-flex align-items-center justify-content-center" style="left:485px;top:799px">x2</div>

<!-- map controls -->
<div class="over rounded-1" style="left:10px;top:10px;width:30px;height:60px"><svg width="30" height="60"><path d="M0 29.500H30" stroke="#ccc"/><path d="M9.500 17H21.500M15.500 11V23M9.500 47H21.500" stroke="#000" stroke-width="2.300"/></svg></div>
<div class="over rounded-1 d-flex align-items-center" style="left:50px;top:10px;width:227px;height:31px;font-size:14.9px;padding-left:7px"><svg width="17" height="17" viewBox="0 0 17 17" style="margin-right:9px"><rect x=".500" y=".500" width="16" height="16" rx="3" fill="#fff" stroke="#aaa"/><path d="M3 8.500L7 12.500L14 4.500" fill="none" stroke="#000" stroke-width="3"/></svg>Show only rooms in this area</div>
<div class="over rounded-1 d-flex align-items-center justify-content-between" style="left:11px;top:975px;width:166px;height:33px;padding:0 12px;color:#c0c0c0;font-size:13px">Select area<svg width="7" height="4"><path d="M0 0h7L3.500 4z" fill="#333"/></svg></div>
<div class="over d-flex align-items-center justify-content-center" style="left:573px;top:951px;width:39px;height:36px"><svg width="13" height="13" fill="none" stroke="#b5b5b5" stroke-width="2"><path d="M1 4.500V1h3.500M8.500 1H12v3.500M12 8.500V12H8.500M4.500 12H1V8.500"/></svg></div>
<div class="credit d-flex align-items-center position-absolute end-0 bottom-0" style="width:282px;height:21px;background:rgba(255,255,255,.9);padding:0 0 2px 5px;font-size:14.4px;white-space:pre"><svg width="14" height="9" style="margin-right:4px"><path fill="#4c7be1" d="M0 0h14v5H0z"/><path fill="#ffd500" d="M0 4.500h14V9H0z"/></svg><a href="#">Leaflet</a> | © <a href="#">OpenStreetMap</a> contributors</div>
</section>
</main>
</body>
</html>
